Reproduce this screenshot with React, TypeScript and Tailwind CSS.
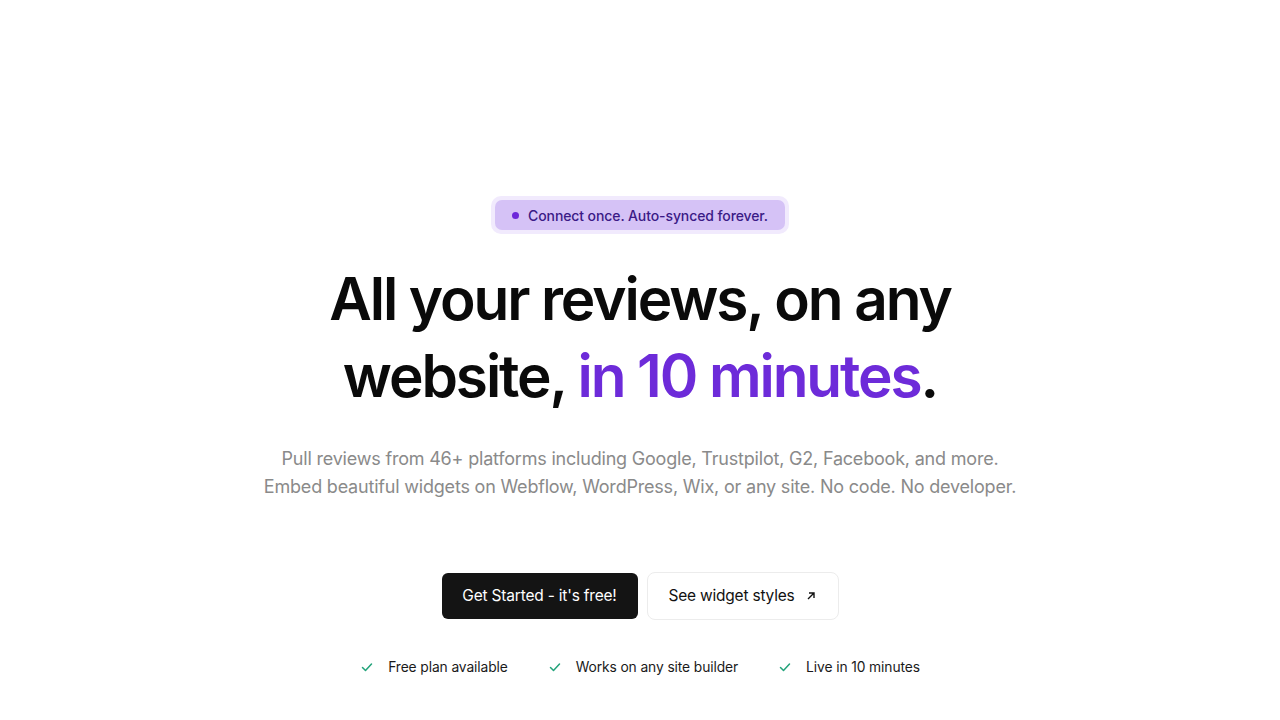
import React from "react";

export default function App() {
  return (
    <div className="min-h-[720px] w-full bg-white flex flex-col items-center" style={{ fontFamily: "Inter, 'Noto Sans', sans-serif" }}>
      <div className="mt-[196px] rounded-[10px] bg-[#f1eafd] p-[4px]">
        <div className="flex items-center gap-[9px] rounded-[7px] bg-[#d5c2f6] px-[17px] h-[30px]">
          <span className="h-[7px] w-[7px] rounded-full bg-[#6d28d9]" />
          <span className="text-[14px] font-medium text-[#3b1a86] tracking-[-0.1px]">Connect once. Auto-synced forever.</span>
        </div>
      </div>
      <h1 className="mt-[26px] text-center text-[58.5px] leading-[77px] font-semibold tracking-[-2.1px] text-[#0a0a0a]">
        All your reviews, on any
        <br />
        website, <span className="text-[#6d2bd9]">in 10 minutes</span>.
      </h1>
      <p className="mt-[31px] text-center text-[18px] leading-[28px] text-[#8a8a8a] tracking-[-0.2px]">
        Pull reviews from 46+ platforms including Google, Trustpilot, G2, Facebook, and more.
        <br />
        Embed beautiful widgets on Webflow, WordPress, Wix, or any site. No code. No developer.
      </p>
      <div className="mt-[71px] flex items-center gap-[9px]">
        <button className="h-[46px] w-[196px] rounded-[6px] bg-[#141414] text-[15.5px] text-white tracking-[-0.2px]">
          Get Started - it's free!
        </button>
        <button className="h-[48px] w-[192px] rounded-[8px] border border-[#ececec] bg-white text-[15.5px] text-[#111] tracking-[-0.2px] flex items-center justify-center gap-[10px]">
          See widget styles
          <svg width="12" height="12" viewBox="0 0 12 12" fill="none" stroke="#111" strokeWidth="1.4">
            <path d="M3 9L9 3M4 3h5v5" />
          </svg>
        </button>
      </div>
      <div className="mt-[37px] flex items-center gap-[40px] text-[13.8px] text-[#1a1a1a] tracking-[-0.1px]">
        {["Free plan available", "Works on any site builder", "Live in 10 minutes"].map((t) => (
          <div key={t} className="flex items-center gap-[14px]">
            <svg width="14" height="14" viewBox="0 0 14 14" fill="none" stroke="#22a37a" strokeWidth="1.5" strokeLinecap="round" strokeLinejoin="round">
              <path d="M2.5 7.5l3 3 6-6.5" />
            </svg>
            <span>{t}</span>
          </div>
        ))}
      </div>
    </div>
  );
}
